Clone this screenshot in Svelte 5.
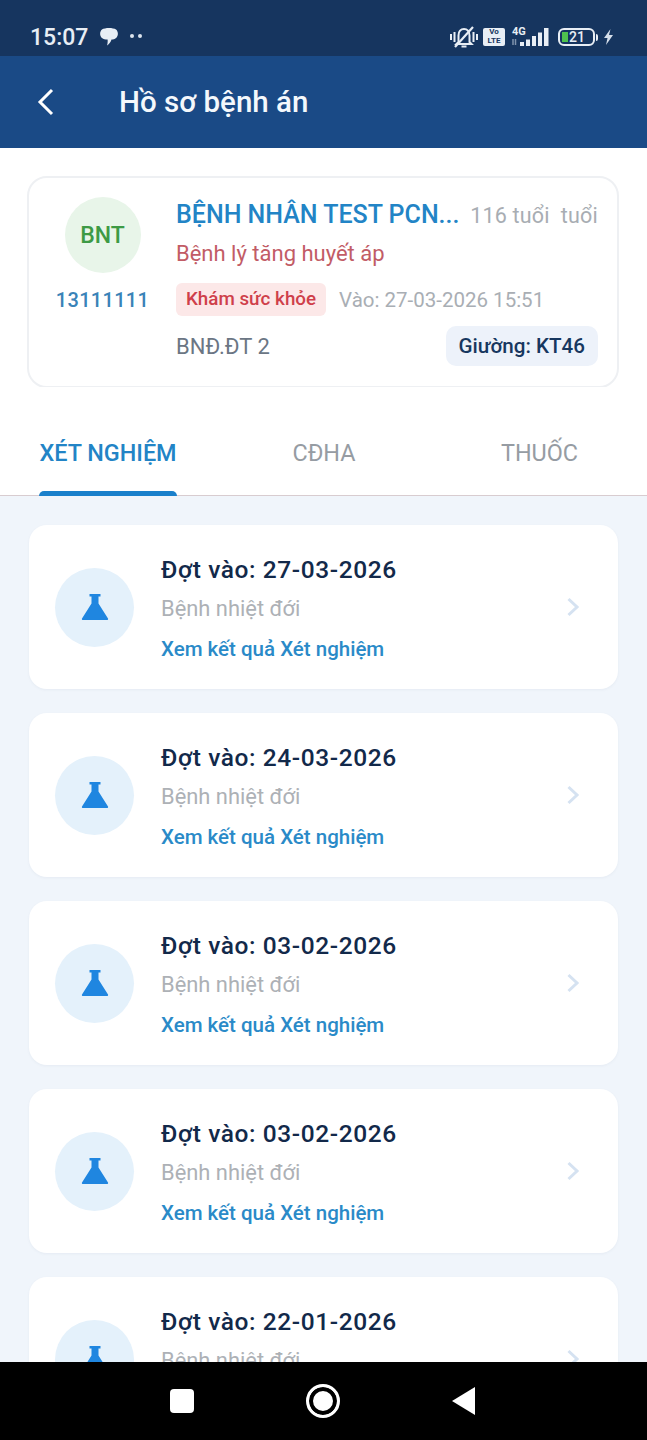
<script>
	const records = ['27-03-2026', '24-03-2026', '03-02-2026', '03-02-2026', '22-01-2026'];
	const tabs = ['XÉT NGHIỆM', 'CĐHA', 'THUỐC'];
</script>

<div class="screen">
	<div class="status">
		<span class="time">15:07</span>
		<svg class="chat" viewBox="0 0 20 18" width="20" height="18" aria-hidden="true">
			<path d="M3 1.500C6-.5 14-.5 17 1.500c2.500 2 2.500 6.500 0 8.500-1.200 1-2.800 1.500-4.500 1.600-.6 2.200-2.200 4.400-4.500 5.900.6-1.800.8-3.700.6-5.900C6.200 11.500 4.300 11 3 10 .5 8 .5 3.500 3 1.500z" fill="#e8eef5" />
		</svg>
		<span class="dots"><i></i><i></i></span>
		<div class="status-right">
			<svg class="bell" viewBox="0 0 28 22" width="28" height="22" aria-hidden="true">
				<path d="M8.500 16V9.500C8.500 5.500 10.800 3 14 3s5.500 2.500 5.500 6.500V16l2 2h-15zM11.500 20.500h5" fill="none" stroke="#e8eef5" stroke-width="2" />
				<path d="M5 21 23 1" stroke="#e8eef5" stroke-width="2.200" />
				<path d="M1 8v6M4.500 6v10M23.500 6v10M27 8v6" stroke="#e8eef5" stroke-width="2" />
			</svg>
			<span class="volte">Vo<br />LTE</span>
			<span class="net">
				<span class="four">4G</span>
				<svg viewBox="0 0 38 18" width="38" height="18" aria-hidden="true">
					<path d="M2 11v6M4.500 11v6" stroke="#7f93ad" stroke-width="1.500" />
					<path d="M9 14h4v4H9zM15 11.500h4V18h-4zM21 8h4v10h-4zM27 4.500h4V18h-4zM33 0h4.500v18H33z" fill="#e8eef5" />
				</svg>
			</span>
			<span class="battery"><i></i><b>21</b></span>
			<span class="nub"></span>
			<svg class="bolt" viewBox="0 0 11 16" width="11" height="16" aria-hidden="true">
				<path d="M7.500 0 1 9h3.500L3 16l7-10H6z" fill="#d5deea" />
			</svg>
		</div>
	</div>

	<header class="topbar">
		<svg class="back" viewBox="0 0 20 32" width="20" height="32" aria-hidden="true">
			<path d="M16 4 4 16l12 12" fill="none" stroke="#fff" stroke-width="3" />
		</svg>
		<h1>Hồ sơ bệnh án</h1>
	</header>

	<section class="patient-wrap">
		<div class="patient">
			<div class="who">
				<div class="avatar">BNT</div>
				<div class="code">13111111</div>
			</div>
			<div class="info">
				<div class="row name-row">
					<span class="name">BỆNH NHÂN TEST PCN...</span>
					<span class="age">116 tuổi&nbsp; tuổi</span>
				</div>
				<div class="diagnosis">Bệnh lý tăng huyết áp</div>
				<div class="row tag-row">
					<span class="tag">Khám sức khỏe</span>
					<span class="date">Vào: 27-03-2026 15:51</span>
				</div>
				<div class="row ward-row">
					<span class="ward">BNĐ.ĐT 2</span>
					<span class="bed">Giường: KT46</span>
				</div>
			</div>
		</div>
	</section>

	<nav class="tabs">
		{#each tabs as tab, i}
			<div class="tab" class:active={i === 0}>
				<span>{tab}</span>
			</div>
		{/each}
	</nav>

	<main class="list">
		{#each records as date}
			<article class="record">
				<div class="flask">
					<svg viewBox="0 0 28 28" width="28" height="28" aria-hidden="true">
						<path d="M8.500 1h11v2.500h-2v7L27 25.500c.400.900 0 1.500-1 1.500H2c-1 0-1.400-.6-1-1.500l9.500-15v-7h-2z" fill="#1f86e0" />
					</svg>
				</div>
				<div class="text">
					<div class="title">Đợt vào: {date}</div>
					<div class="sub">Bệnh nhiệt đới</div>
					<div class="link">Xem kết quả Xét nghiệm</div>
				</div>
				<svg class="chevron" viewBox="0 0 14 20" width="14" height="20" aria-hidden="true">
					<path d="M2.500 2 11 10l-8.500 8" fill="none" stroke="#d5e2f1" stroke-width="3" />
				</svg>
			</article>
		{/each}
	</main>

	<footer class="navbar">
		<span class="square"></span>
		<span class="circle"></span>
		<svg viewBox="0 0 23 28" width="23" height="28" aria-hidden="true">
			<path d="M23 0v28L0 14z" fill="#fff" />
		</svg>
	</footer>
</div>

<style>
	:global(body) {
		margin: 0;
		background: #fff;
	}

	.screen {
		display: flex;
		flex-direction: column;
		width: 647px;
		height: 1440px;
		overflow: hidden;
		font-family: Roboto, 'Liberation Sans', sans-serif;
		background: #fff;
	}

	.status {
		display: flex;
		flex: none;
		align-items: center;
		height: 56px;
		padding: 18px 33px 0 30px;
		box-sizing: border-box;
		background: #16355f;
		color: #e8eef5;
	}

	.time {
		font-size: 23px;
		font-weight: 500;
	}

	.chat {
		margin-left: 11px;
	}

	.dots {
		display: flex;
		gap: 4px;
		margin-left: 11px;
		padding-bottom: 3px;
	}

	.dots i {
		width: 4px;
		height: 4px;
		border-radius: 50%;
		background: #dce4ee;
	}

	.status-right {
		display: flex;
		align-items: center;
		margin-left: auto;
	}

	.volte {
		width: 22px;
		height: 18px;
		margin-left: 5px;
		border-radius: 2px;
		background: #e8eef5;
		color: #16355f;
		font-size: 8px;
		font-weight: 700;
		line-height: 8.500px;
		text-align: center;
	}

	.net {
		position: relative;
		display: flex;
		width: 38px;
		margin-left: 6px;
	}

	.four {
		position: absolute;
		top: -2px;
		left: 1px;
		font-size: 11px;
		font-weight: 700;
		line-height: 11px;
	}

	.battery {
		display: flex;
		align-items: center;
		width: 37px;
		height: 18px;
		margin-left: 9px;
		box-sizing: border-box;
		border: 2px solid #e8eef5;
		border-radius: 6px;
	}

	.battery i {
		width: 6px;
		height: 10px;
		margin-left: 2px;
		background: #4fc34f;
	}

	.battery b {
		margin-left: 1px;
		font-size: 14px;
		font-weight: 500;
	}

	.nub {
		width: 2px;
		height: 7px;
		margin-left: 1px;
		border-radius: 0 2px 2px 0;
		background: #e8eef5;
	}

	.bolt {
		margin-left: 5px;
	}

	.topbar {
		display: flex;
		flex: none;
		align-items: center;
		height: 92px;
		padding-left: 36px;
		box-sizing: border-box;
		background: #1a4a86;
	}

	h1 {
		margin: 2px 0 0 63px;
		color: #f4f8fc;
		font-size: 29.500px;
		font-weight: 480;
		line-height: 1;
	}

	.patient-wrap {
		flex: none;
		padding: 28px 28px 0 27px;
	}

	.patient {
		display: flex;
		height: 212px;
		padding-right: 19px;
		box-sizing: border-box;
		border: 2px solid #eef0f3;
		border-radius: 20px;
		background: #fff;
	}

	.who {
		display: flex;
		flex: none;
		flex-direction: column;
		align-items: center;
		width: 147px;
		padding-top: 19px;
	}

	.avatar {
		display: flex;
		align-items: center;
		justify-content: center;
		width: 76px;
		height: 76px;
		border-radius: 50%;
		background: #e8f5e9;
		color: #3d9a45;
		font-size: 23px;
		font-weight: 480;
	}

	.code {
		margin-top: 15px;
		color: #3a83b8;
		font-size: 20px;
		font-weight: 480;
		letter-spacing: 0.3px;
		line-height: 24px;
	}

	.info {
		flex: 1;
		min-width: 0;
		padding-top: 22px;
	}

	.row {
		display: flex;
		align-items: center;
		justify-content: space-between;
	}

	.name {
		color: #2284c6;
		font-size: 25px;
		font-weight: 480;
		line-height: 30px;
		white-space: nowrap;
	}

	.age {
		color: #a8adb3;
		font-size: 21.500px;
		letter-spacing: 0.2px;
		white-space: nowrap;
	}

	.diagnosis {
		margin-top: 11px;
		color: #c25c66;
		font-size: 22px;
		line-height: 26px;
	}

	.tag-row {
		justify-content: flex-start;
		margin-top: 16px;
	}

	.tag {
		height: 33px;
		padding: 0 10px;
		border-radius: 6px;
		background: #fce8e8;
		color: #cf3f4a;
		font-size: 18.800px;
		font-weight: 500;
		line-height: 33px;
	}

	.date {
		margin-left: 13px;
		color: #a9aeb4;
		font-size: 20.500px;
	}

	.ward-row {
		margin-top: 10px;
	}

	.ward {
		color: #6b7684;
		font-size: 22px;
	}

	.bed {
		height: 40px;
		padding: 0 13px;
		border-radius: 10px;
		background: #edf2fa;
		color: #17375f;
		font-size: 20.600px;
		font-weight: 500;
		line-height: 40px;
	}

	.tabs {
		display: grid;
		flex: none;
		grid-template-columns: 216px 216px 215px;
		height: 109px;
		margin-top: -1px;
		box-sizing: border-box;
		border-bottom: 1px solid #d8ccd0;
		background: #fff;
	}

	.tab {
		display: flex;
		justify-content: center;
		padding-top: 25px;
		color: #969ca3;
		font-size: 23.400px;
		font-weight: 450;
	}

	.tab span {
		position: relative;
		display: block;
		line-height: 83px;
	}

	.tab.active {
		color: #2284c6;
		font-weight: 480;
	}

	.tab.active span::after {
		content: '';
		position: absolute;
		right: 0;
		bottom: -1px;
		left: 0;
		height: 5px;
		border-radius: 5px 5px 0 0;
		background: #1a80cb;
	}

	.list {
		display: flex;
		flex: 1;
		flex-direction: column;
		gap: 24px;
		min-height: 0;
		padding: 29px 29px 0;
		overflow: hidden;
		background: #f0f5fb;
	}

	.record {
		display: flex;
		flex: none;
		align-items: center;
		height: 164px;
		padding: 0 38px 0 26px;
		box-sizing: border-box;
		border-radius: 18px;
		background: #fff;
		box-shadow: 0 1px 3px rgba(30, 60, 100, 0.05);
	}

	.flask {
		display: flex;
		flex: none;
		align-items: center;
		justify-content: center;
		width: 79px;
		height: 79px;
		border-radius: 50%;
		background: #e4f1fb;
	}

	.text {
		flex: 1;
		margin-left: 27px;
		padding-top: 3px;
	}

	.title {
		color: #12294a;
		font-size: 24.500px;
		font-weight: 480;
		letter-spacing: 0.6px;
		line-height: 28px;
	}

	.sub {
		margin-top: 13px;
		color: #adb1b6;
		font-size: 21.900px;
		line-height: 24px;
	}

	.link {
		margin-top: 16px;
		color: #2a8ac8;
		font-size: 20.500px;
		font-weight: 480;
		line-height: 24px;
	}

	.navbar {
		display: flex;
		flex: none;
		align-items: center;
		gap: 112px;
		height: 78px;
		padding-left: 170px;
		box-sizing: border-box;
		background: #000;
	}

	.square {
		width: 24px;
		height: 24px;
		border-radius: 4px;
		background: #fff;
	}

	.circle {
		width: 34px;
		height: 34px;
		box-sizing: border-box;
		border: 3px solid #fff;
		border-radius: 50%;
		background: #fff;
		box-shadow: inset 0 0 0 4px #000;
	}
</style>
